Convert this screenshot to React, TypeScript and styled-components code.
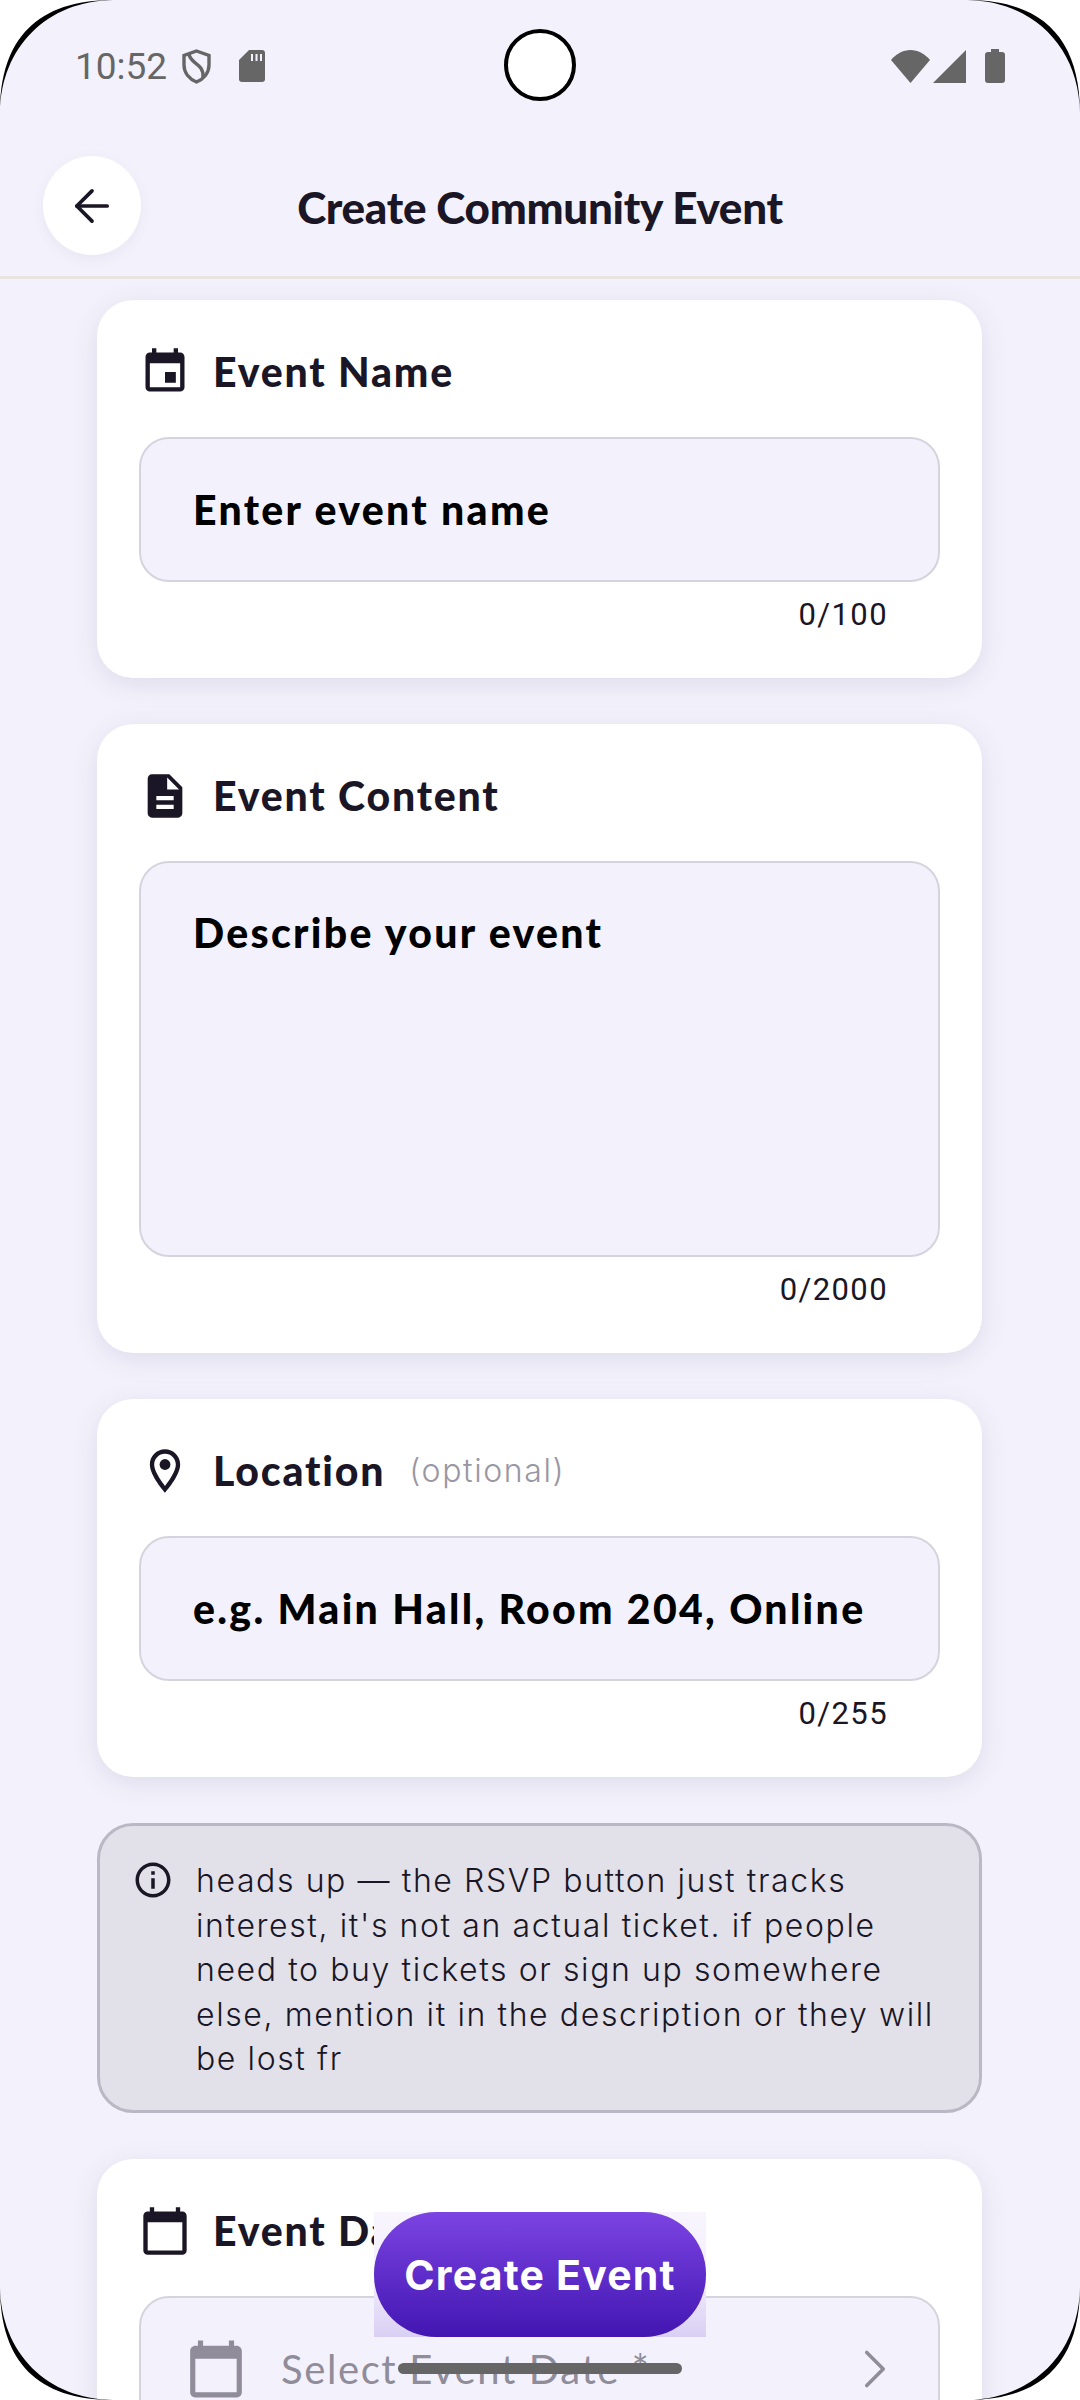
import styled, { createGlobalStyle } from 'styled-components';
import { ArrowLeft, ChevronRight } from 'lucide-react';
import { MdEvent, MdDescription, MdOutlineLocationOn, MdInfoOutline, MdCalendarToday } from 'react-icons/md';

const GlobalStyle = createGlobalStyle`
    * { box-sizing: border-box; }
    html, body { margin: 0; padding: 0; background: #fff; }
`;

const Screen = styled.div`
    position: relative;
    width: 1080px;
    height: 2400px;
    overflow: hidden;
    display: flex;
    flex-direction: column;
    background: #f3f2fc;
    font-family: "Lato", sans-serif;
`;
const StatusBar = styled.div`
    height: 130px;
    flex-shrink: 0;
    padding: 2px 75px 0 75px;
    display: flex;
    align-items: center;
    justify-content: space-between;
    color: #666;
`;
const StatusGroup = styled.div<{ $gap: number }>`
    display: flex;
    align-items: center;
    gap: ${(p) => p.$gap}px;
`;
const Time = styled.span`
    font-family: "Roboto", sans-serif;
    font-size: 37px;
`;
const Header = styled.header`
    height: 149px;
    flex-shrink: 0;
    display: grid;
    grid-template-columns: 98px 1fr 98px;
    align-items: center;
    padding: 5px 43px 0;
    border-bottom: 3px solid #e8e4df;
`;
const BackButton = styled.button`
    width: 98px;
    height: 99px;
    border: 0;
    border-radius: 50%;
    background: #fff;
    color: #1a1625;
    display: flex;
    align-items: center;
    justify-content: center;
    padding: 0;
    box-shadow: 0 4px 14px rgba(40, 30, 80, 0.06);
`;
const Title = styled.h1`
    margin: 3px 0 0;
    text-align: center;
    font-size: 44px;
    font-weight: 900;
    letter-spacing: -0.3px;
    color: #1a1625;
`;
const Scroll = styled.main`
    flex: 1;
    min-height: 0;
    padding: 21px 98px 0 97px;
    display: flex;
    flex-direction: column;
    gap: 46px;
`;
const Card = styled.section`
    flex-shrink: 0;
    background: #fff;
    border-radius: 36px;
    padding: 36px 42px 34px;
    box-shadow: 0 6px 28px rgba(30, 20, 70, 0.1);
`;
const LabelRow = styled.div`
    height: 66px;
    margin-bottom: 35px;
    display: flex;
    align-items: center;
    gap: 22px;
    color: #1a1625;

    > svg {
        margin-top: 5px;
    }
`;
const Label = styled.h2`
    margin: 5px 0 0;
    font-size: 41px;
    font-weight: 900;
    letter-spacing: 1.8px;
    color: #1a1625;
`;
const Optional = styled.span`
    font-family: "Inter", sans-serif;
    font-size: 32px;
    font-weight: 300;
    letter-spacing: 1.6px;
    color: #9a96a3;
    margin: 4px 0 0 2px;
`;
const Field = styled.div<{ $tall?: boolean }>`
    height: ${(p) => (p.$tall ? '396px' : '145px')};
    border: 2.5px solid #d5d4de;
    border-radius: 30px;
    background: #f3f2fc;
    padding: ${(p) => (p.$tall ? '45px' : '0')} 52px 0;
    display: flex;
    align-items: ${(p) => (p.$tall ? 'flex-start' : 'center')};
`;
const Placeholder = styled.span`
    font-size: 41px;
    font-weight: 900;
    letter-spacing: 2.3px;
    color: #000;
`;
const Counter = styled.div`
    height: 62px;
    padding: 2px 52px 0 0;
    display: flex;
    align-items: center;
    justify-content: flex-end;
    font-family: "Roboto", sans-serif;
    font-size: 31px;
    letter-spacing: 1.4px;
    color: #1a1625;
`;
const Notice = styled.aside`
    flex-shrink: 0;
    height: 290px;
    display: flex;
    gap: 22px;
    padding: 33px 40px 0 32px;
    border: 3px solid #b9b8c4;
    border-radius: 36px;
    background: #e2e1ea;
    color: #1a1625;
`;
const NoticeText = styled.p`
    margin: 0;
    font-family: "Inter", sans-serif;
    font-size: 32px;
    font-weight: 300;
    letter-spacing: 1.6px;
    line-height: 44.6px;
    white-space: nowrap;
`;
const SelectField = styled.div`
    height: 145px;
    border: 2.5px solid #d5d4de;
    border-radius: 30px;
    background: #f3f2fc;
    padding: 0 30px 0 44px;
    display: flex;
    align-items: center;
    gap: 34px;
    color: #908c99;
`;
const SelectText = styled.span`
    flex: 1;
    font-size: 40px;
    font-weight: 400;
    letter-spacing: 1.6px;
`;
const ButtonGlow = styled.div`
    position: absolute;
    left: 374px;
    top: 2212px;
    width: 332px;
    height: 125px;
    background: linear-gradient(180deg, #f8f5fe 0%, #f3effc 50%, #d9cff4 100%);
`;
const CreateButton = styled.button`
    position: absolute;
    left: 374px;
    top: 2212px;
    width: 332px;
    height: 125px;
    border: 0;
    border-radius: 62px;
    background: linear-gradient(180deg, #7c44e2 0%, #4216b2 100%);
    color: #fff;
    font-family: "Inter", sans-serif;
    font-size: 41px;
    font-weight: 700;
    letter-spacing: 1.2px;
    padding: 0;
`;
const Camera = styled.div`
    position: absolute;
    left: 504px;
    top: 29px;
    width: 72px;
    height: 72px;
    border-radius: 50%;
    background: #fff;
    border: 4px solid #000;
`;
const HomeBar = styled.div`
    position: absolute;
    left: 398px;
    top: 2363px;
    width: 284px;
    height: 11px;
    border-radius: 6px;
    background: #666;
`;
const CornerSvg = styled.svg<{ $right?: boolean; $bottom?: boolean }>`
    position: absolute;
    width: 114px;
    height: 114px;
    ${(p) => (p.$right ? 'right: 0;' : 'left: 0;')}
    ${(p) => (p.$bottom ? 'bottom: 0;' : 'top: 0;')}
    transform: scale(${(p) => (p.$right ? -1 : 1)}, ${(p) => (p.$bottom ? -1 : 1)});
`;

function Corner(props: { $right?: boolean; $bottom?: boolean }) {
    return (
        <CornerSvg viewBox="0 0 114 114" {...props}>
            <path fill="#fff" d="M0 0 H113 C38 0 0 38 0 113 Z" />
            <path fill="#000" d="M0 113 C0 38 38 0 113 0 C47 1 1 47 0 113 Z" />
        </CornerSvg>
    );
}

export default function App() {
    return (
        <Screen>
            <GlobalStyle />
            <StatusBar>
                <StatusGroup $gap={15}>
                    <Time>10:52</Time>
                    <svg width="29" height="35" viewBox="0 0 29 35" fill="none" stroke="currentColor" strokeWidth="3.4">
                        <path d="M14.5 2 L27 6.5 V16 C27 24 21.5 30 14.5 33 C7.5 30 2 24 2 16 V6.5 Z" />
                        <path d="M7 5 C8 15 22 14 21 28" />
                    </svg>
                    <svg width="26" height="32" viewBox="0 0 26 32" style={{ marginLeft: 13 }}>
                        <path fill="currentColor" d="M10 0 H23 C25 0 26 1 26 3 V29 C26 31 25 32 23 32 H3 C1 32 0 31 0 29 V10 Z" />
                        <path stroke="#f3f2fc" strokeWidth="2" d="M13 4 V11 M17.5 4 V11 M22 4 V11" />
                    </svg>
                </StatusGroup>
                <StatusGroup $gap={19}>
                    <svg width="75" height="33" viewBox="0 0 75 33" fill="currentColor">
                        <path d="M19.5 33 L0 10 C5 4 12 0 19.5 0 C27 0 34 4 39 10 Z" />
                        <path d="M75 0 V33 H42 Z" />
                    </svg>
                    <svg width="20" height="34" viewBox="0 0 20 34" fill="currentColor">
                        <path d="M6 0 H14 V3 H17 C19 3 20 4 20 6 V31 C20 33 19 34 17 34 H3 C1 34 0 33 0 31 V6 C0 4 1 3 3 3 H6 Z" />
                    </svg>
                </StatusGroup>
            </StatusBar>
            <Header>
                <BackButton aria-label="Back"><ArrowLeft size={52} strokeWidth={1.7} /></BackButton>
                <Title>Create Community Event</Title>
            </Header>
            <Scroll>
                <Card>
                    <LabelRow><MdEvent size={52} /><Label>Event Name</Label></LabelRow>
                    <Field><Placeholder>Enter event name</Placeholder></Field>
                    <Counter>0/100</Counter>
                </Card>
                <Card>
                    <LabelRow><MdDescription size={52} /><Label>Event Content</Label></LabelRow>
                    <Field $tall><Placeholder>Describe your event</Placeholder></Field>
                    <Counter>0/2000</Counter>
                </Card>
                <Card>
                    <LabelRow>
                        <MdOutlineLocationOn size={52} />
                        <Label>Location</Label>
                        <Optional>(optional)</Optional>
                    </LabelRow>
                    <Field><Placeholder>e.g. Main Hall, Room 204, Online</Placeholder></Field>
                    <Counter>0/255</Counter>
                </Card>
                <Notice>
                    <MdInfoOutline size={42} style={{ flexShrink: 0 }} />
                    <NoticeText>
                        heads up — the RSVP button just tracks<br />
                        interest, it's not an actual ticket. if people<br />
                        need to buy tickets or sign up somewhere<br />
                        else, mention it in the description or they will<br />
                        be lost fr
                    </NoticeText>
                </Notice>
                <Card>
                    <LabelRow><MdCalendarToday size={52} /><Label>Event Date</Label></LabelRow>
                    <SelectField>
                        <MdCalendarToday size={62} />
                        <SelectText>Select Event Date *</SelectText>
                        <ChevronRight size={66} strokeWidth={1.3} />
                    </SelectField>
                </Card>
            </Scroll>
            <Camera />
            <ButtonGlow />
            <CreateButton>Create Event</CreateButton>
            <HomeBar />
            <Corner />
            <Corner $right />
            <Corner $bottom />
            <Corner $right $bottom />
        </Screen>
    );
}
